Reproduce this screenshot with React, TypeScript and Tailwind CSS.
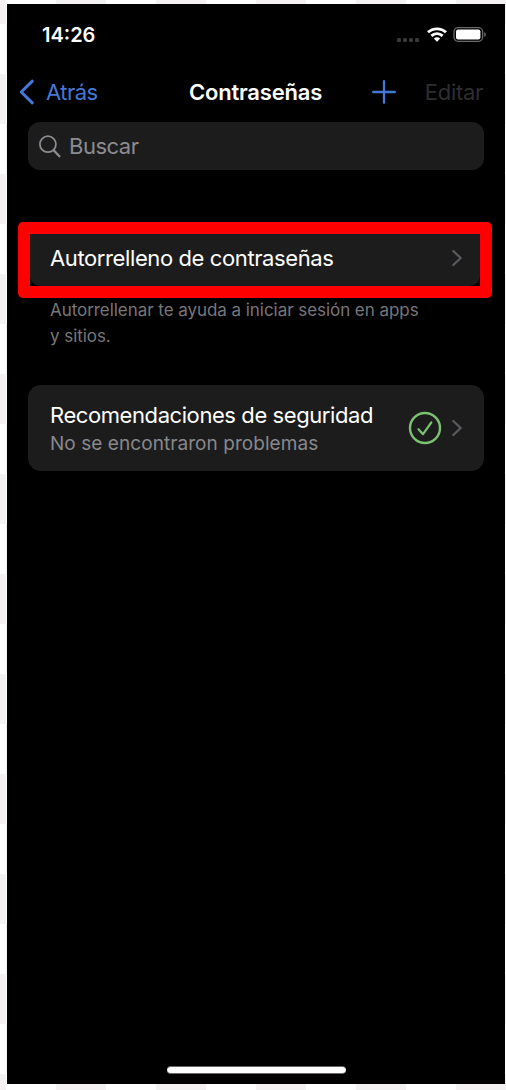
interface IconProps {
  className?: string;
}

function Chevron({ className = "" }: IconProps) {
  return (
    <svg width="10" height="18" viewBox="0 0 10 18" fill="none" className={className}>
      <path d="M1.3 2 L8.7 9 L1.3 16" stroke="#5b5b5f" strokeWidth="2.2" strokeLinecap="round" strokeLinejoin="round" />
    </svg>
  );
}

function StatusBar() {
  return (
    <div className="flex h-[61px] items-center justify-between pr-[18px] pl-[35px]">
      <span className="mt-[1px] text-[20px] leading-[24px] font-semibold">14:26</span>
      <div className="flex items-center">
        <div className="mt-[10px] flex gap-[2px]">
          <i className="size-[4px] rounded-[1.5px] bg-[#3b3b3d]" />
          <i className="size-[4px] rounded-[1.5px] bg-[#3b3b3d]" />
          <i className="size-[4px] rounded-[1.5px] bg-[#3b3b3d]" />
          <i className="size-[4px] rounded-[1.5px] bg-[#3b3b3d]" />
        </div>
        <svg width="20" height="15" viewBox="0 0 20 15" fill="none" stroke="#fff" strokeWidth="2.9" className="ml-[8px]">
          <path d="M1 5.3 C6 .7 14 .7 19 5.3" />
          <path d="M4.4 8.9 C7.5 5.9 12.5 5.9 15.6 8.9" />
          <path d="M10 14.8 L6.8 11.5 C8.6 9.9 11.4 9.9 13.2 11.5 Z" fill="#fff" stroke="none" />
        </svg>
        <svg width="34" height="15" viewBox="0 0 34 15" fill="none" className="ml-[6px]">
          <rect x="1" y=".7" width="28.6" height="13.6" rx="4" stroke="#69696b" strokeWidth="1.3" />
          <rect x="3" y="2.6" width="24.4" height="9.8" rx="2" fill="#fff" />
          <path d="M31.2 5 C33.4 5.8 33.4 9.2 31.2 10 Z" fill="#69696b" />
        </svg>
      </div>
    </div>
  );
}

function NavBar() {
  return (
    <div className="grid h-[54px] grid-cols-[182px_1fr_162px] items-center">
      <div className="flex items-center pl-[12px] text-[#4478d8]">
        <svg width="16" height="26" viewBox="0 0 16 26" fill="none" stroke="currentColor" strokeWidth="3" strokeLinecap="round" strokeLinejoin="round">
          <path d="M13.3 2.2 L2.2 13 L13.3 23.8" />
        </svg>
        <span className="ml-[11px] text-[22px] leading-[28px] tracking-[-0.5px]">Atrás</span>
      </div>
      <h1 className="text-[22px] leading-[28px] font-semibold tracking-[-0.2px] whitespace-nowrap">Contraseñas</h1>
      <div className="flex items-center justify-end pr-[22px]">
        <svg width="24" height="24" viewBox="0 0 24 24" stroke="#4478d8" strokeWidth="2.3" strokeLinecap="round">
          <path d="M12 1.2 V22.8 M1.2 12 H22.8" />
        </svg>
        <span className="ml-[29px] text-[22px] leading-[28px] tracking-[-0.3px] text-[#2e2e30]">Editar</span>
      </div>
    </div>
  );
}

function SearchField() {
  return (
    <div className="mr-[21px] ml-[21px] flex h-[48px] items-center rounded-[12px] bg-[#1c1c1d] pl-[11px] text-[#8b8b90]">
      <svg width="22" height="23" viewBox="0 0 22 23" fill="none" stroke="currentColor" strokeLinecap="round">
        <circle cx="8.9" cy="9.2" r="8" strokeWidth="1.8" />
        <path d="M14.8 15.4 L20.4 21.2" strokeWidth="2.3" />
      </svg>
      <span className="ml-[8px] text-[22px] leading-[28px] tracking-[-0.5px]">Buscar</span>
    </div>
  );
}

export default function App() {
  return (
    <div className="h-[1090px] w-[506px] overflow-hidden bg-[conic-gradient(#f3f1f2_25%,#fff_0_50%,#f3f1f2_0_75%,#fff_0)] bg-[length:100px_100px] bg-[position:6px_-26px] pt-[4px] pl-[7px] font-[Inter,'Liberation_Sans',sans-serif]">
      <div className="flex h-[1080px] w-[498px] flex-col bg-black text-white">
        <StatusBar />
        <NavBar />
        <div className="h-[3px]" />
        <SearchField />

        {/* highlighted row */}
        <div className="mt-[52px] ml-[11px] h-[76px] w-[474px] rounded-[5px] bg-[#ff0000] p-[12px]">
          <div className="h-full bg-black">
            <div className="flex h-[52px] items-center justify-between rounded-b-[10px] bg-[#1c1c1d] pr-[18px] pb-[5px] pl-[20px]">
              <span className="text-[22px] leading-[28px] tracking-[-0.39px] whitespace-nowrap">Autorrelleno de contraseñas</span>
              <Chevron />
            </div>
          </div>
        </div>
        <p className="-mt-[1px] pl-[43px] text-[17px] leading-[26px] tracking-[-0.05px] whitespace-nowrap text-[#77777b]">
          Autorrellenar te ayuda a iniciar sesión en apps
          <br />y sitios.
        </p>

        <div className="mt-[36px] mr-[21px] ml-[21px] flex h-[86px] items-center rounded-[13px] bg-[#1c1c1d] pr-[22px] pl-[22px]">
          <div className="flex-1 pt-[2px] whitespace-nowrap">
            <div className="text-[22px] leading-[28px] tracking-[-0.42px]">Recomendaciones de seguridad</div>
            <div className="pt-[1px] text-[19px] leading-[27px] tracking-[0.06px] text-[#88888c]">No se encontraron problemas</div>
          </div>
          <svg width="34" height="34" viewBox="0 0 34 34" fill="none" stroke="#7bc171" strokeLinecap="round" strokeLinejoin="round">
            <circle cx="17" cy="17" r="15" strokeWidth="2.4" />
            <path d="M10.5 18.2 L15 23.2 L23.3 11.5" strokeWidth="2.2" />
          </svg>
          <Chevron className="ml-[10px]" />
        </div>

        <div className="mt-auto mb-[10px] ml-[160px] h-[8px] w-[179px] rounded-full border-y border-[#6b6568] bg-white" />
      </div>
    </div>
  );
}
